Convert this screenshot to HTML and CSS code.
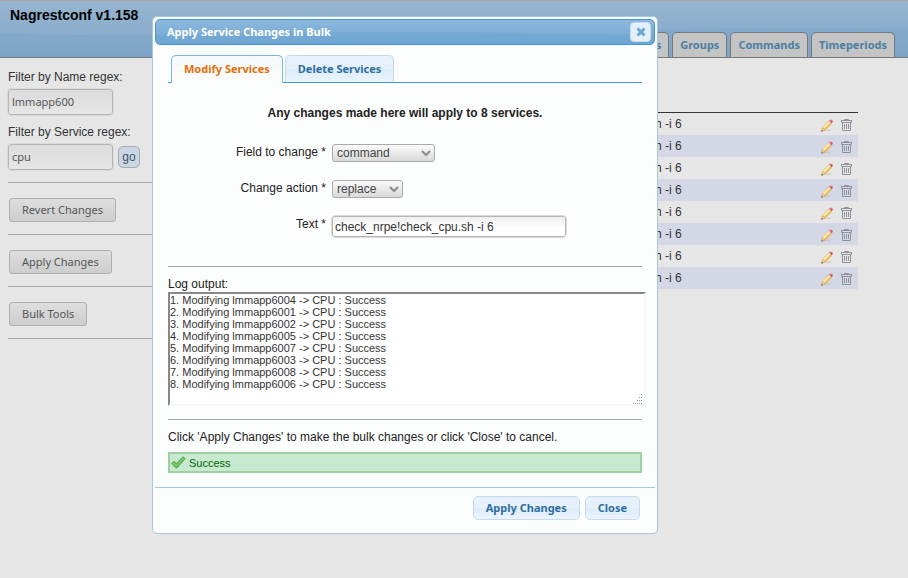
FILE: index.html
```html
<!DOCTYPE html>
<html lang="en">
<head>
<meta charset="utf-8">
<title>Nagrestconf</title>
<link rel="stylesheet" href="styles.css">
</head>
<body>
<svg class="sprites" aria-hidden="true">
  <defs>
    <linearGradient id="lead" x1="0" y1="0" x2="1" y2="1">
      <stop offset="0.3" stop-color="#fbe49a"/><stop offset="0.7" stop-color="#e6b03a"/>
    </linearGradient>
    <symbol id="pencil" viewBox="0 0 12 13">
      <path d="M4 12L11.500 9.500L8 12Z" fill="#c4c4c4"/>
      <path d="M.5 12.300L1.500 8.300L7.800 1.700L10.800 4.500L4.500 11Z" fill="url(#lead)" stroke="#d9a75a" stroke-width=".5"/>
      <path d="M2.500 9L8.700 2.700" stroke="#fff3c0" stroke-width="1.300"/>
      <path d="M.5 12.300L1.500 8.500L4.300 11Z" fill="#ecd3ae" stroke="#b99568" stroke-width=".4"/>
      <path d="M.2 12.700L.8 10.800L2.200 12Z" fill="#7c6a5c"/>
      <path d="M7.800 1.900L9 .8Q10.200 .2 11.300 1.200Q12.100 2.200 11.400 3.300L10.300 4.500Z" fill="#e47078"/>
      <path d="M7.200 2.500L8.100 1.600L10.900 4.100L10 5Z" fill="#d7c9c4"/>
      <path d="M10 3.500L11.300 2.400" stroke="#cf3e4c" stroke-width="1.200"/>
    </symbol>
    <symbol id="trash" viewBox="0 0 11 12">
      <path d="M3.500 1.500V.5H7.500V1.500M0 1.500H11M.5 1.500V3.500H10.500V1.500M1.500 3.500V11.500H9.500V3.500M3.500 5V10M5.500 5V10M7.500 5V10" fill="none" stroke="#92929a"/>
    </symbol>
  </defs>
</svg>
<header class="topbar">
  <svg class="gloss" viewBox="0 0 908 57" preserveAspectRatio="none" aria-hidden="true"><path d="M0 33Q130 37 300 33T908 27V57H0Z" fill="#6f9dc4" fill-opacity=".25"/></svg>
  <h1>Nagrestconf v1.158</h1>
  <nav class="tabs">
    <a href="#contacts">Contacts</a>
    <a href="#groups">Groups</a>
    <a href="#commands">Commands</a>
    <a href="#timeperiods">Timeperiods</a>
  </nav>
</header>
<div class="page">
  <aside>
    <form class="filters">
      <label for="name">Filter by Name regex:</label>
      <input id="name" class="field" value="lmmapp600">
      <label for="service">Filter by Service regex:</label>
      <div class="go-row"><input id="service" class="field" value="cpu"><button type="button" class="go">go</button></div>
    </form>
    <hr>
    <button type="button" class="tool">Revert Changes</button>
    <hr>
    <button type="button" class="tool">Apply Changes</button>
    <hr>
    <button type="button" class="tool">Bulk Tools</button>
    <hr>
  </aside>
  <main>
    <table>
      <tbody id="services">
        <tr><td>check_nrpe!check_cpu.sh -i 6</td><td class="actions"><svg class="pencil"><use href="#pencil"/></svg><svg class="trash"><use href="#trash"/></svg></td></tr>
        <tr><td>check_nrpe!check_cpu.sh -i 6</td><td class="actions"><svg class="pencil"><use href="#pencil"/></svg><svg class="trash"><use href="#trash"/></svg></td></tr>
        <tr><td>check_nrpe!check_cpu.sh -i 6</td><td class="actions"><svg class="pencil"><use href="#pencil"/></svg><svg class="trash"><use href="#trash"/></svg></td></tr>
        <tr><td>check_nrpe!check_cpu.sh -i 6</td><td class="actions"><svg class="pencil"><use href="#pencil"/></svg><svg class="trash"><use href="#trash"/></svg></td></tr>
        <tr><td>check_nrpe!check_cpu.sh -i 6</td><td class="actions"><svg class="pencil"><use href="#pencil"/></svg><svg class="trash"><use href="#trash"/></svg></td></tr>
        <tr><td>check_nrpe!check_cpu.sh -i 6</td><td class="actions"><svg class="pencil"><use href="#pencil"/></svg><svg class="trash"><use href="#trash"/></svg></td></tr>
        <tr><td>check_nrpe!check_cpu.sh -i 6</td><td class="actions"><svg class="pencil"><use href="#pencil"/></svg><svg class="trash"><use href="#trash"/></svg></td></tr>
        <tr><td>check_nrpe!check_cpu.sh -i 6</td><td class="actions"><svg class="pencil"><use href="#pencil"/></svg><svg class="trash"><use href="#trash"/></svg></td></tr>
      </tbody>
    </table>
  </main>
</div>
<section class="dialog" role="dialog" aria-labelledby="dialog-title">
  <div class="titlebar">
    <svg class="gloss" viewBox="0 0 498 24" preserveAspectRatio="none" aria-hidden="true"><path d="M0 14Q250 10 498 15V24H0Z" fill="#5c9ccc" fill-opacity=".2"/></svg>
    <h2 id="dialog-title">Apply Service Changes in Bulk</h2>
    <button type="button" class="close" aria-label="Close dialog"><svg viewBox="0 0 10 10"><path d="M1.500 1.500L8.500 8.500M8.500 1.500L1.500 8.500" stroke="#6da8d5" stroke-width="3"/></svg></button>
  </div>
  <div class="content">
    <div class="dialog-tabs">
      <button type="button" class="active">Modify Services</button>
      <button type="button">Delete Services</button>
    </div>
    <p class="notice">Any changes made here will apply to 8 services.</p>
    <form class="fields">
      <label for="field">Field to change *</label>
      <div class="select wide"><select id="field"><option>command</option></select><svg viewBox="0 0 10 7"><path d="M1 1L5 5L9 1" fill="none" stroke="#8b8b8b" stroke-width="2"/></svg></div>
      <label for="action">Change action *</label>
      <div class="select"><select id="action"><option>replace</option></select><svg viewBox="0 0 10 7"><path d="M1 1L5 5L9 1" fill="none" stroke="#8b8b8b" stroke-width="2"/></svg></div>
      <label for="text">Text *</label>
      <input id="text" class="field" value="check_nrpe!check_cpu.sh -i 6">
    </form>
    <hr>
    <label class="log-label" for="log">Log output:</label>
    <div class="log">
      <textarea id="log" rows="8">1. Modifying lmmapp6004 -&gt; CPU : Success
2. Modifying lmmapp6001 -&gt; CPU : Success
3. Modifying lmmapp6002 -&gt; CPU : Success
4. Modifying lmmapp6005 -&gt; CPU : Success
5. Modifying lmmapp6007 -&gt; CPU : Success
6. Modifying lmmapp6003 -&gt; CPU : Success
7. Modifying lmmapp6008 -&gt; CPU : Success
8. Modifying lmmapp6006 -&gt; CPU : Success</textarea>
      <svg viewBox="0 0 10 10" aria-hidden="true"><path d="M8 .5H9M6 3.500H10M4 6.500H10M0 9.500H10" stroke="#999" stroke-dasharray="1 1"/></svg>
    </div>
    <hr>
    <p class="hint">Click 'Apply Changes' to make the bulk changes or click 'Close' to cancel.</p>
    <div class="success"><svg viewBox="0 0 15 13"><path d="M.7 7.500L3 5.200L5.500 7.500L12 .8L14.300 2.500L6 12L4.800 12Z" fill="#62bd52" stroke="#4a9f48" stroke-width=".7"/><path d="M2 7L5.500 9.800L12.500 2.200" fill="none" stroke="#8fd878"/></svg>Success</div>
  </div>
  <footer>
    <button type="button">Apply Changes</button>
    <button type="button">Close</button>
  </footer>
</section>
</body>
</html>
```
FILE: styles.css
```css
* { box-sizing: border-box; }
body {
  margin: 0;
  min-height: 100vh;
  background: #e6e6e6;
  color: #333;
  font: 12px/16px "Liberation Sans", Arial, sans-serif;
}
h1, h2, p { margin: 0; }
button, input, select, textarea { font: inherit; margin: 0; }
svg { display: block; }
.sprites { position: absolute; width: 0; height: 0; }

.topbar {
  position: relative;
  display: flex;
  justify-content: space-between;
  height: 58px;
  padding: 0 13px 0 10px;
  border-top: 1px solid #aaa5a3;
  border-bottom: 1px solid #777;
  background: linear-gradient(#96b4cf, #82a9ca);
}
.gloss { position: absolute; inset: 0; width: 100%; height: 100%; }
.topbar h1 { position: relative; padding-top: 6px; color: #000; font-size: 14px; line-height: 16px; }
.tabs { position: relative; display: flex; align-items: flex-end; gap: 3px; }
.tabs a {
  height: 25px;
  padding: 0 7px;
  border: 1px solid #777;
  border-bottom: 0;
  border-radius: 5px 5px 0 0;
  background: #c4c4c4;
  color: #4c7ea3;
  font: bold 11px/23px "Noto Sans", sans-serif;
  text-decoration: none;
}

.page { display: grid; grid-template-columns: 160px 1fr; }
aside { padding: 11px 0 0 8px; }
.filters { display: grid; }
.filters label { line-height: 16px; }
.field {
  height: 26px;
  padding: 0 3px;
  border: 1px solid #b5b5b5;
  border-radius: 3px;
  outline: 1px solid #dadada;
  background: linear-gradient(#dcdcdc, #e6e6e6);
  color: #555;
}
aside .field { width: 105px; margin: 4px 0 9px; padding-bottom: 2px; font: 11px "Noto Sans", sans-serif; }
.go-row { display: flex; align-items: center; gap: 5px; }
.go {
  width: 22px;
  height: 22px;
  margin-bottom: 5px;
  padding: 0;
  border: 1px solid #aaa;
  border-radius: 5px;
  background: #c9d7e5;
  color: #456;
}
hr { margin: 0; border: 0; border-top: 1px solid #aaa; }
aside hr { margin: 3px 0 0; }
.tool {
  display: block;
  height: 24px;
  margin: 15px 0 12px 1px;
  padding: 0 12px 2px;
  border: 1px solid #b0b0b0;
  border-radius: 3px;
  background: linear-gradient(#dedede, #cdcdcd);
  color: #555;
  font: 11px "Noto Sans", sans-serif;
}

main { padding: 54px 50px 0 0; }
table { width: 100%; border-top: 1px solid #333; border-collapse: collapse; }
tr { height: 22px; }
tr:nth-child(even) { background: #d4d7e6; }
td { padding: 0; }
td:first-child { padding-left: 363px; }
.actions { display: flex; align-items: center; justify-content: flex-end; gap: 8px; height: 22px; padding: 2px 6px 0 0; }
.pencil { width: 12px; height: 13px; }
.trash { width: 11px; height: 12px; }

.dialog {
  position: absolute;
  top: 16px;
  left: 152px;
  width: 506px;
  padding: 2px;
  border: 1px solid #a6c9e2;
  border-radius: 5px;
  background: #fcfdfd;
  color: #222;
}
.titlebar {
  position: relative;
  display: flex;
  align-items: center;
  justify-content: space-between;
  height: 26px;
  padding: 0 3px 0 11px;
  border: 1px solid #4297d7;
  border-radius: 5px;
  background: linear-gradient(#8bb7dc, #72a8d4);
}
.titlebar h2 { position: relative; color: #fff; font: bold 11px/16px "Noto Sans", sans-serif; }
.close {
  position: relative;
  display: grid;
  place-items: center;
  width: 21px;
  height: 20px;
  padding: 0;
  border: 1px solid #c5dbec;
  border-radius: 4px;
  background: #e3f0fb;
}
.close svg { width: 10px; height: 10px; }
.content { padding: 10px 13px 14px; }
.dialog-tabs { display: flex; gap: 2px; padding-left: 3px; border-bottom: 1px solid #4297d7; }
.dialog-tabs button, footer button {
  padding: 0 12px 2px;
  border: 1px solid #c5dbec;
  border-radius: 5px;
  background: linear-gradient(#e6f1fb 50%, #dcecfb 50%, #eaf4fd);
  color: #2e6e9e;
  font: bold 11px "Noto Sans", sans-serif;
}
.dialog-tabs button { height: 27px; border-bottom: 0; border-radius: 5px 5px 0 0; }
.dialog-tabs .active {
  height: 28px;
  margin-bottom: -1px;
  border-color: #79b7e7;
  background: linear-gradient(#f4f8fb, #fcfdfd);
  color: #e17009;
}
.notice { margin: 22px 0 20px; font-weight: bold; text-align: center; }
.fields { display: grid; grid-template-columns: 158px 1fr; gap: 12px 6px; padding-bottom: 29px; align-items: center; }
.fields label { height: 24px; text-align: right; line-height: 22px; }
.select { position: relative; display: flex; align-items: center; width: 71px; }
.select.wide { width: 103px; }
select {
  appearance: none;
  width: 100%;
  height: 18px;
  padding: 0 4px;
  border: 1px solid #aaa;
  border-radius: 3px;
  background: linear-gradient(#fbfbfb, #d9d9d9);
  color: #444;
}
.select svg { position: absolute; right: 4px; width: 10px; height: 7px; pointer-events: none; }
.fields .field { width: 234px; height: 21px; margin-top: 3px; padding: 0 2px; background: linear-gradient(#eee, #fff 60%); color: #333; }
.log-label { display: block; margin-top: 9px; }
.log { position: relative; width: 478px; }
.log svg { position: absolute; right: 3px; bottom: 2px; width: 10px; height: 10px; pointer-events: none; }
textarea {
  display: block;
  width: 100%;
  height: 114px;
  padding: 0;
  border: 2px solid #888;
  border-color: #888 #f6f7f7 #f6f7f7 #888;
  background: #fff;
  color: #333;
  font-size: 11px;
  line-height: 12px;
  resize: none;
}
.log + hr { margin-top: 13px; }
.hint { margin: 9px 0 7px; }
.success {
  display: flex;
  align-items: center;
  gap: 3px;
  height: 21px;
  padding-left: 1px;
  border: 2px solid #9fd09f;
  background: #c6e9d0;
  color: #060;
  font-size: 11px;
}
.success svg { width: 15px; height: 13px; }
footer { display: flex; justify-content: flex-end; gap: 5px; padding: 8px 15px 11px; border-top: 1px solid #a6c9e2; }
footer button { height: 24px; }
```
